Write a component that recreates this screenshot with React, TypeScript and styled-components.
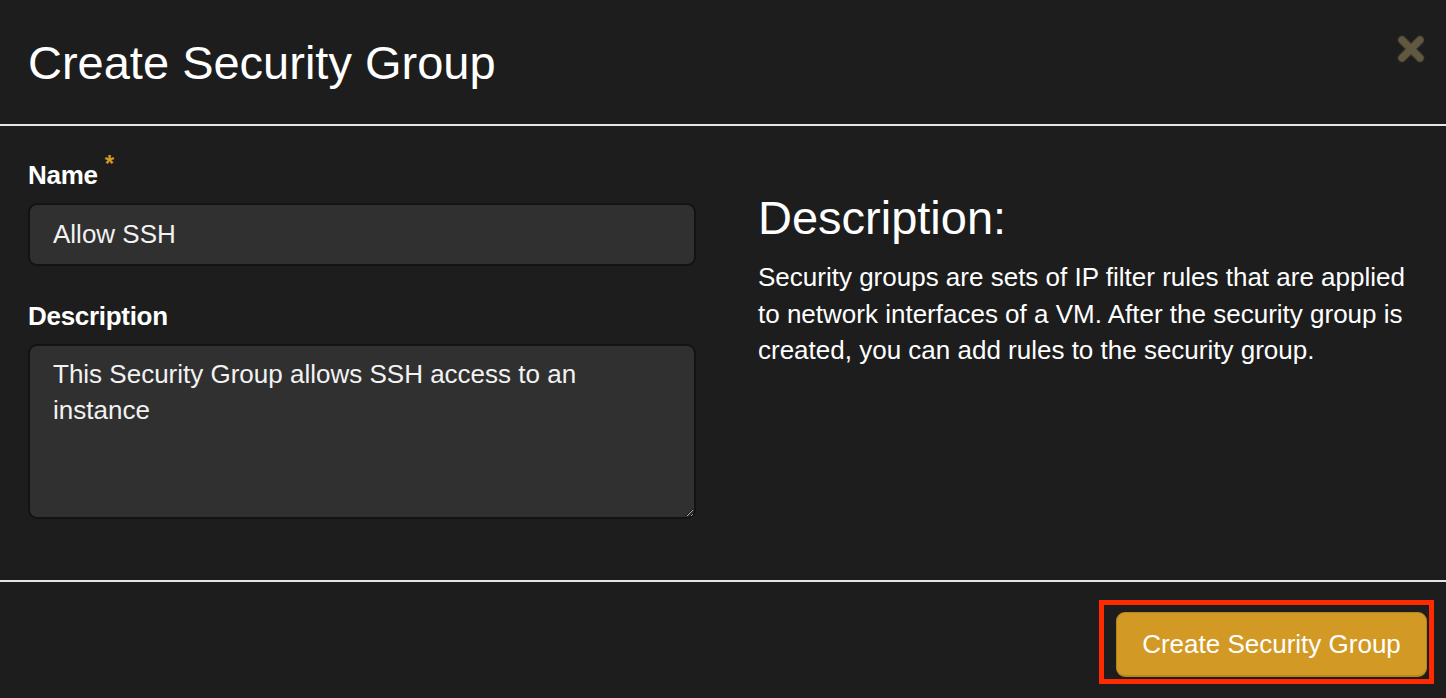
import { createGlobalStyle, styled } from 'styled-components';

const GlobalStyle = createGlobalStyle`
  html, body {
    margin: 0;
    padding: 0;
    background: #1d1d1d;
  }
  body {
    font-family: "Liberation Sans", Arial, Helvetica, sans-serif;
    color: #ffffff;
  }
  * {
    box-sizing: border-box;
  }
`;

const Modal = styled.div`
  width: 1446px;
  height: 698px;
  background: #1d1d1d;
  display: flex;
  flex-direction: column;
  overflow: hidden;
`;

const Header = styled.div`
  flex-shrink: 0;
  height: 126px;
  display: flex;
  align-items: center;
  justify-content: space-between;
  padding: 0 20px 0 28px;
  border-bottom: 2px solid #e6e6e6;
`;

const Title = styled.h1`
  margin: 2px 0 0;
  font-size: 47px;
  font-weight: 400;
  line-height: 52px;
  color: #ffffff;
`;

const CloseButton = styled.button`
  align-self: flex-start;
  margin-top: 34px;
  padding: 0;
  border: 0;
  background: none;
  display: grid;
  place-content: center;
  cursor: pointer;
`;

const Body = styled.div`
  flex-shrink: 0;
  height: 456px;
  display: flex;
  gap: 62px;
  padding: 34px 0 0 28px;
  border-bottom: 2px solid #e6e6e6;
`;

const FormColumn = styled.div`
  width: 668px;
  display: flex;
  flex-direction: column;
`;

const Label = styled.label<{ $gap?: number }>`
  font-size: 26px;
  font-weight: 700;
  line-height: 30px;
  color: #ffffff;
  margin-top: ${(p) => p.$gap ?? 0}px;
  margin-bottom: 13px;
  letter-spacing: -0.3px;
`;

const Required = styled.sup`
  color: #d39b25;
  font-size: 24px;
  font-weight: 700;
  margin-left: 7px;
  vertical-align: 12px;
  line-height: 0;
`;

const fieldStyles = `
  width: 668px;
  background: #303030;
  border: 2px solid #131313;
  border-radius: 9px;
  color: #f2f2f2;
  font-family: "Liberation Sans", Arial, Helvetica, sans-serif;
  font-size: 26px;
  padding: 0 23px;
  outline: none;
`;

const TextInput = styled.input`
  ${fieldStyles}
  height: 63px;
  line-height: 59px;
`;

const TextArea = styled.textarea`
  ${fieldStyles}
  height: 175px;
  line-height: 36px;
  padding-top: 10px;
  resize: vertical;
`;

const InfoColumn = styled.div`
  width: 664px;
  padding-top: 32px;
`;

const InfoHeading = styled.h3`
  margin: 0 0 15px;
  font-size: 47px;
  font-weight: 400;
  line-height: 52px;
  color: #ffffff;
`;

const InfoText = styled.p`
  margin: 0;
  font-size: 26px;
  line-height: 36.5px;
  color: #ffffff;
`;

const Footer = styled.div`
  flex: 1;
  display: flex;
  justify-content: flex-end;
  align-items: flex-start;
  padding: 30px 19px 0 0;
`;

const Highlight = styled.div`
  position: relative;
`;

const HighlightFrame = styled.div`
  position: absolute;
  top: -12px;
  left: -17px;
  right: -7px;
  bottom: -7px;
  border: 5px solid #ff2a00;
  pointer-events: none;
`;

const PrimaryButton = styled.button`
  width: 311px;
  height: 65px;
  background: #d29a25;
  border: 1px solid #b7851c;
  border-bottom-width: 2px;
  border-radius: 9px;
  color: #ffffff;
  font-family: "Liberation Sans", Arial, Helvetica, sans-serif;
  font-size: 26px;
  cursor: pointer;
`;

const CloseIcon = () => (
  <svg width="30" height="30" viewBox="0 0 30 30">
    <path
      d="M6 6 L24 24 M24 6 L6 24"
      stroke="#3a3527"
      strokeWidth="9"
      strokeLinecap="round"
    />
    <path
      d="M6 6 L24 24 M24 6 L6 24"
      stroke="#615841"
      strokeWidth="7"
      strokeLinecap="round"
    />
  </svg>
);

export default function App() {
  return (
    <>
      <GlobalStyle />
      <Modal>
        <Header>
          <Title>Create Security Group</Title>
          <CloseButton aria-label="Close">
            <CloseIcon />
          </CloseButton>
        </Header>
        <Body>
          <FormColumn>
            <Label htmlFor="sg-name">
              Name<Required>*</Required>
            </Label>
            <TextInput id="sg-name" defaultValue="Allow SSH" />
            <Label htmlFor="sg-desc" $gap={35}>
              Description
            </Label>
            <TextArea
              id="sg-desc"
              defaultValue="This Security Group allows SSH access to an instance"
            />
          </FormColumn>
          <InfoColumn>
            <InfoHeading>Description:</InfoHeading>
            <InfoText>
              Security groups are sets of IP filter rules that are applied to
              network interfaces of a VM. After the security group is created,
              you can add rules to the security group.
            </InfoText>
          </InfoColumn>
        </Body>
        <Footer>
          <Highlight>
            <PrimaryButton>Create Security Group</PrimaryButton>
            <HighlightFrame />
          </Highlight>
        </Footer>
      </Modal>
    </>
  );
}
